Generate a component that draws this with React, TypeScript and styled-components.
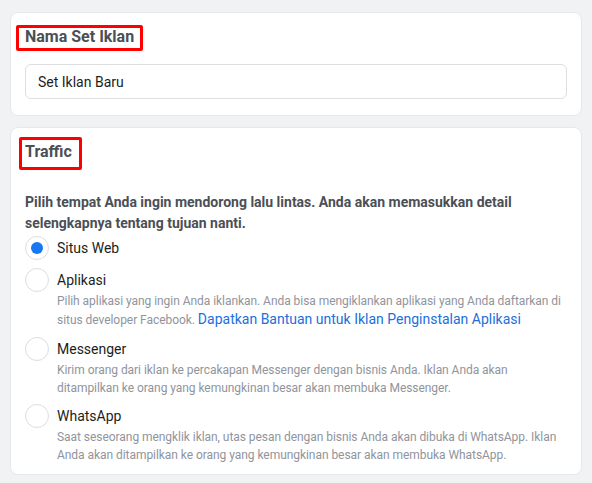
import React from "react";
import styled, { createGlobalStyle } from "styled-components";

const GlobalStyle = createGlobalStyle`
  html, body {
    margin: 0;
    padding: 0;
    background: #f1f2f3;
  }
  body {
    font-family: Roboto, "Liberation Sans", Arial, sans-serif;
    -webkit-font-smoothing: antialiased;
  }
  * { box-sizing: border-box; }
`;

const Page = styled.div`
  display: flex;
  flex-direction: column;
  gap: 11px;
  padding: 12px 10px 8px 10px;
`;

const Card = styled.section<{ $pb?: number }>`
  background: #ffffff;
  border: 1px solid #e6e8ea;
  border-radius: 8px;
  padding: 14px 14px ${(p) => p.$pb ?? 16}px 14px;
  display: flex;
  flex-direction: column;
`;

const Title = styled.h2`
  position: relative;
  align-self: flex-start;
  margin: 0;
  font-size: 16px;
  line-height: 20px;
  font-weight: 700;
  color: #4b4f56;
`;

type Box = { $l: number; $t: number; $r: number; $b: number };

const Highlight = styled.span<Box>`
  position: absolute;
  left: ${(p) => p.$l}px;
  top: ${(p) => p.$t}px;
  right: ${(p) => p.$r}px;
  bottom: ${(p) => p.$b}px;
  border: 3px solid #ff0000;
  border-radius: 2px;
  pointer-events: none;
`;

const TextInput = styled.input`
  margin-top: 17px;
  height: 35px;
  width: 100%;
  border: 1px solid #dddfe2;
  border-radius: 6px;
  padding: 0 12px;
  font-family: Roboto, "Liberation Sans", Arial, sans-serif;
  font-size: 14px;
  color: #1c1e21;
  background: #fff;
  outline: none;
`;

const Prompt = styled.p`
  margin: 30px 0 0 0;
  font-size: 14px;
  line-height: 21px;
  font-weight: 700;
  color: #4b4f56;
`;

const Options = styled.div`
  margin-top: 2px;
  display: flex;
  flex-direction: column;
  gap: 7px;
`;

const Option = styled.label<{ $extra?: number }>`
  display: grid;
  grid-template-columns: 24px 1fr;
  column-gap: 8px;
  align-items: center;
  margin-bottom: ${(p) => p.$extra ?? 0}px;
  cursor: pointer;
`;

const Radio = styled.span<{ $checked?: boolean }>`
  width: 24px;
  height: 24px;
  border-radius: 50%;
  border: 1px solid #dadde1;
  background: #fff;
  display: flex;
  align-items: center;
  justify-content: center;
  &::after {
    content: "";
    width: 12px;
    height: 12px;
    border-radius: 50%;
    background: ${(p) => (p.$checked ? "#1877f2" : "transparent")};
  }
`;

const OptionLabel = styled.span`
  font-size: 14px;
  line-height: 24px;
  color: #1c1e21;
`;

const OptionHint = styled.span`
  grid-column: 2;
  font-size: 12px;
  line-height: 18px;
  letter-spacing: -0.05px;
  color: #90949c;
`;

const HelpLink = styled.a`
  font-size: 14px;
  letter-spacing: 0;
  color: #216fdb;
  text-decoration: none;
`;

type Choice = {
  id: string;
  label: string;
  hint?: React.ReactNode;
  checked?: boolean;
  extra?: number;
};

const choices: Choice[] = [
  { id: "web", label: "Situs Web", checked: true, extra: 1 },
  {
    id: "app",
    label: "Aplikasi",
    extra: 1,
    hint: (
      <>
        Pilih aplikasi yang ingin Anda iklankan. Anda bisa mengiklankan aplikasi yang Anda daftarkan di
        situs developer Facebook.{" "}
        <HelpLink href="#">Dapatkan Bantuan untuk Iklan Penginstalan Aplikasi</HelpLink>
      </>
    ),
  },
  {
    id: "messenger",
    label: "Messenger",
    hint: "Kirim orang dari iklan ke percakapan Messenger dengan bisnis Anda. Iklan Anda akan ditampilkan ke orang yang kemungkinan besar akan membuka Messenger.",
  },
  {
    id: "whatsapp",
    label: "WhatsApp",
    hint: "Saat seseorang mengklik iklan, utas pesan dengan bisnis Anda akan dibuka di WhatsApp. Iklan Anda akan ditampilkan ke orang yang kemungkinan besar akan membuka WhatsApp.",
  },
];

export default function App() {
  return (
    <>
      <GlobalStyle />
      <Page>
        <Card>
          <Title>
            Nama Set Iklan
            <Highlight $l={-9} $t={-2} $r={-9} $b={-4} />
          </Title>
          <TextInput defaultValue="Set Iklan Baru" />
        </Card>
        <Card $pb={10}>
          <Title>
            Traffic
            <Highlight $l={-6} $t={-5} $r={-10} $b={-8} />
          </Title>
          <Prompt>
            Pilih tempat Anda ingin mendorong lalu lintas. Anda akan memasukkan detail selengkapnya
            tentang tujuan nanti.
          </Prompt>
          <Options>
            {choices.map((c) => (
              <Option key={c.id} $extra={c.extra}>
                <Radio $checked={c.checked} />
                <OptionLabel>{c.label}</OptionLabel>
                {c.hint && <OptionHint>{c.hint}</OptionHint>}
              </Option>
            ))}
          </Options>
        </Card>
      </Page>
    </>
  );
}
